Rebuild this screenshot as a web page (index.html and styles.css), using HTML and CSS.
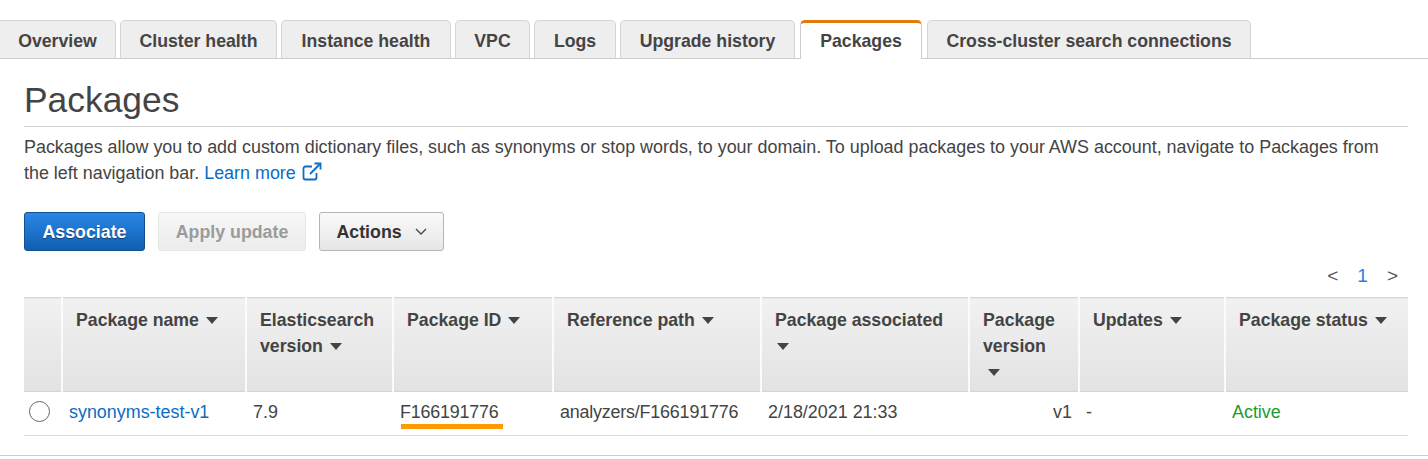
FILE: index.html
```html
<!DOCTYPE html>
<html lang="en">
<head>
<meta charset="utf-8">
<title>Packages</title>
<link rel="stylesheet" href="styles.css">
</head>
<body>
<nav class="tabs">
  <a class="tab tab-first">Overview</a>
  <a class="tab tab-cluster">Cluster health</a>
  <a class="tab tab-instance">Instance health</a>
  <a class="tab tab-vpc">VPC</a>
  <a class="tab tab-logs">Logs</a>
  <a class="tab tab-upgrade">Upgrade history</a>
  <a class="tab tab-active">Packages</a>
  <a class="tab tab-cross">Cross-cluster search connections</a>
</nav>
<main class="content">
  <h1 class="title">Packages</h1>
  <p class="desc">Packages allow you to add custom dictionary files, such as synonyms or stop words, to your domain. To upload packages to your AWS account, navigate to Packages from the left navigation bar. <a class="link">Learn more</a>
    <svg class="ext" width="20" height="19" viewBox="0 0 20 19" fill="none" stroke="#0a6cc4" stroke-width="1.8"><path d="M10 4.5H3.5a2 2 0 0 0-2 2v9a2 2 0 0 0 2 2h9a2 2 0 0 0 2-2V11"/><path d="M8 12 17.5 2.5"/><path d="M12.5 1.5h6v6" /></svg>
  </p>
  <div class="actions">
    <button class="btn btn-primary">Associate</button>
    <button class="btn btn-disabled">Apply update</button>
    <button class="btn btn-default">Actions
      <svg class="chev" width="12" height="7" viewBox="0 0 12 7" fill="none" stroke="#444" stroke-width="1.3"><path d="M1 1l5 5 5-5"/></svg>
    </button>
  </div>
  <div class="pager"><span>&lt;</span><span class="page-num">1</span><span>&gt;</span></div>
  <table class="grid">
    <colgroup>
      <col class="c0"><col class="c1"><col class="c2"><col class="c3"><col class="c4"><col class="c5"><col class="c6"><col class="c7"><col class="c8">
    </colgroup>
    <thead>
      <tr>
        <th></th>
        <th>Package name <i class="caret"></i></th>
        <th>Elasticsearch version <i class="caret"></i></th>
        <th>Package ID <i class="caret"></i></th>
        <th>Reference path <i class="caret"></i></th>
        <th>Package associated <i class="caret"></i></th>
        <th>Package version <i class="caret caret-low"></i></th>
        <th>Updates <i class="caret"></i></th>
        <th>Package status <i class="caret"></i></th>
      </tr>
    </thead>
    <tbody>
      <tr>
        <td class="radio-cell"><span class="radio"></span></td>
        <td><a class="link">synonyms-test-v1</a></td>
        <td>7.9</td>
        <td class="id-cell tight">F166191776<span class="mark"></span></td>
        <td class="tight">analyzers/F166191776</td>
        <td>2/18/2021 21:33</td>
        <td class="num">v1</td>
        <td>-</td>
        <td class="status">Active</td>
      </tr>
    </tbody>
  </table>
</main>
<div class="foot-rule"></div>
</body>
</html>
```
FILE: styles.css
```css
* { box-sizing: border-box; }
html, body { margin: 0; padding: 0; }
body {
  width: 1428px;
  height: 459px;
  overflow: hidden;
  background: #fff;
  color: #444;
  font-family: "Liberation Sans", Arial, sans-serif;
  font-size: 17.92px;
  line-height: 26px;
}
.tabs {
  display: flex;
  align-items: flex-end;
  height: 59px;
  padding-top: 20px;
  border-bottom: 1px solid #ccc;
}
.tab {
  display: block;
  height: 38px;
  margin-right: 4px;
  padding-top: 7px;
  text-align: center;
  font-size: 17.7px;
  font-weight: 700;
  color: #444;
  background: #eee;
  border: 1px solid #d5d5d5;
  border-bottom: 0;
  border-radius: 5px 5px 0 0;
}
.tab-first { width: 116px; border-left: 0; border-radius: 0 5px 0 0; }
.tab-cluster { width: 157px; }
.tab-instance { width: 170px; }
.tab-vpc { width: 75px; }
.tab-logs { width: 82px; }
.tab-upgrade { width: 175px; margin-right: 5px; }
.tab-active {
  width: 122px;
  height: 39px;
  margin-right: 5px;
  margin-bottom: -1px;
  padding-top: 5px;
  background: #fff;
  border-color: #ccc;
  border-top: 3px solid #e47911;
}
.tab-cross { width: 324px; }
.content { padding: 0 20px 0 24px; }
.title {
  margin: 0;
  height: 68px;
  padding-top: 20px;
  font-size: 35.4px;
  line-height: 42px;
  font-weight: 400;
  color: #444;
  border-bottom: 1px solid #d5d5d5;
}
.desc { margin: 7px 0 0; max-width: 1370px; height: 52px; color: #444; }
.link { color: #0a6cc4; }
.ext { vertical-align: -2px; margin-left: 1px; }
.actions { display: flex; gap: 13px; margin-top: 26px; height: 39px; }
.btn {
  height: 39px;
  padding: 0;
  font: 700 17.8px/26px "Liberation Sans", Arial, sans-serif;
  border-radius: 3px;
}
.btn-primary {
  width: 121px;
  color: #fff;
  background: linear-gradient(#2a87e4, #0f5fb3);
  border: 1px solid #14508f;
  text-shadow: 0 1px 1px rgba(0, 0, 0, .4);
}
.btn-disabled {
  width: 148px;
  color: #9b9b9b;
  background: linear-gradient(#f7f7f7, #ececec);
  border: 1px solid #e6e6e6;
}
.btn-default {
  width: 125px;
  color: #333;
  background: linear-gradient(#fafafa, #e6e6e6);
  border: 1px solid #b5b5b5;
}
.chev { margin-left: 8px; vertical-align: 3px; }
.pager {
  display: flex;
  justify-content: flex-end;
  gap: 19px;
  height: 46px;
  padding: 12px 10px 0 0;
  font-size: 19px;
  color: #555;
}
.page-num { color: #1b87e8; }
.grid {
  width: 1384px;
  table-layout: fixed;
  border-collapse: collapse;
}
.c0 { width: 38px; }
.c1 { width: 184px; }
.c2 { width: 147px; }
.c3 { width: 160px; }
.c4 { width: 208px; }
.c5 { width: 208px; }
.c6 { width: 110px; }
.c7 { width: 146px; }
.c8 { width: 183px; }
.grid th {
  height: 94px;
  padding: 9px 13px 0;
  vertical-align: top;
  text-align: left;
  font-size: 17.7px;
  font-weight: 700;
  color: #444;
  background: linear-gradient(#f1f1f1, #e2e2e2);
  border-top: 1px solid #d5d5d5;
  border-bottom: 1px solid #d5d5d5;
  border-left: 2px solid #fbfbfb;
}
.grid th:first-child { border-left: 0; }
.caret {
  display: inline-block;
  width: 0;
  height: 0;
  margin-left: 2px;
  vertical-align: 2px;
  border-left: 6px solid transparent;
  border-right: 6px solid transparent;
  border-top: 7px solid #444;
}
.caret-low { display: block; margin: 10px 0 0 5px; }
.grid td {
  height: 44px;
  padding: 0 7px 3px;
  vertical-align: middle;
  border-bottom: 1px solid #ddd;
  color: #444;
}
.grid .tight { letter-spacing: -.2px; }
.grid .radio-cell { padding: 0; }
.radio {
  display: block;
  width: 21px;
  height: 21px;
  margin-left: 5px;
  margin-bottom: 5px;
  border: 1px solid #666;
  border-radius: 50%;
  background: #fff;
}
.id-cell { position: relative; }
.mark {
  position: absolute;
  left: 8px;
  top: 32px;
  width: 102px;
  height: 5px;
  background: #f90;
}
.grid .num { text-align: right; }
.grid .status { color: #1a9c2e; }
.foot-rule { margin-top: 19px; border-top: 1px solid #ccc; }
```
